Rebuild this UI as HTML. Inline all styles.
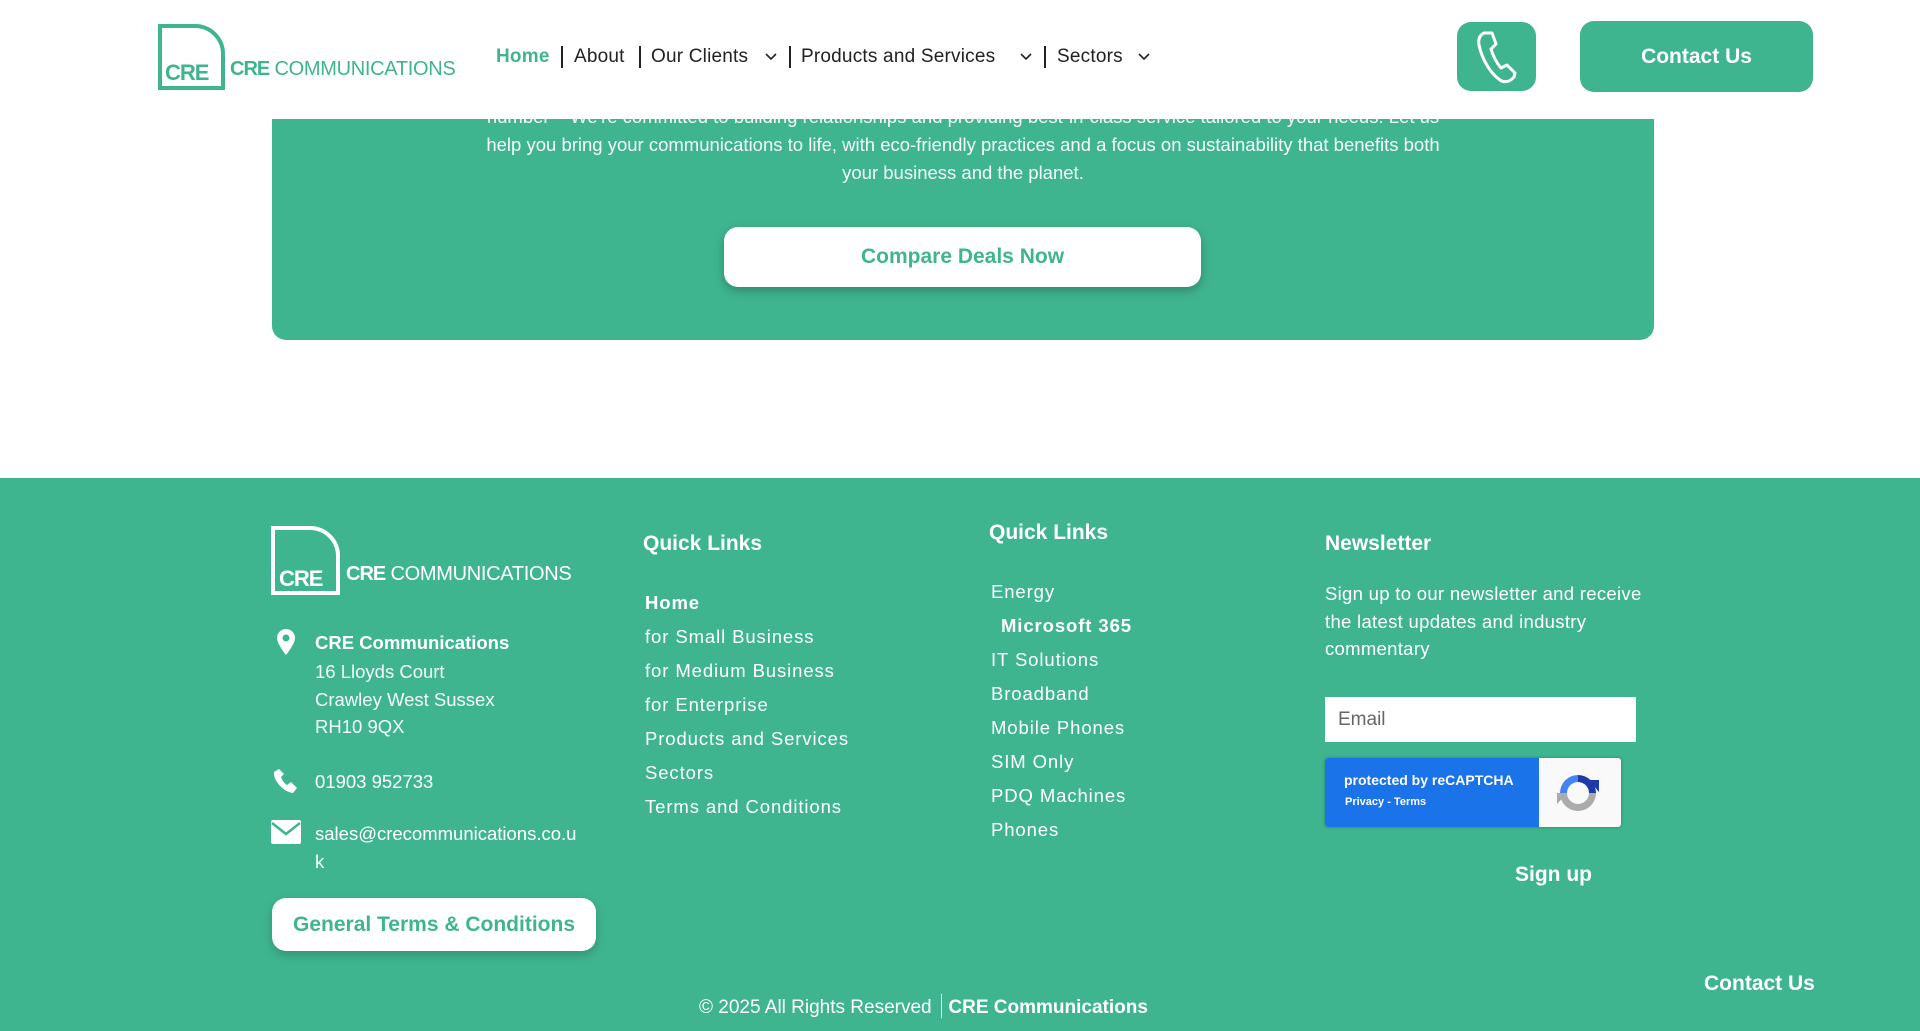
<!DOCTYPE html>
<html><head><meta charset="utf-8"><style>
*{margin:0;padding:0;box-sizing:border-box}
body{width:1920px;height:1031px;overflow:hidden;background:#fff;font-family:"Liberation Sans",sans-serif;position:relative}
.a{position:absolute;white-space:nowrap}
.g{background:#3fb58f}
.w{color:#fff}
.nav{font-size:19px;color:#222;top:46px;letter-spacing:.2px}
.sep{position:absolute;top:46px;width:2px;height:22px;background:#222}
.ql{font-size:18.5px;color:#fff;letter-spacing:.9px}
.ft{font-size:18.5px;color:#fff}
</style></head><body>
<div class="a g" style="left:272px;top:0;width:1382px;height:340px;border-radius:0 0 14px 14px"></div>
<div class="a w" style="left:0;width:1926px;text-align:center;top:103px;font-size:18.5px;line-height:28px;opacity:.95">number – We're committed to building relationships and providing best-in-class service tailored to your needs. Let us<br>help you bring your communications to life, with eco-friendly practices and a focus on sustainability that benefits both<br>your business and the planet.</div>
<div class="a" style="left:724px;top:227px;width:477px;height:60px;background:#fff;border-radius:14px;box-shadow:0 4px 10px rgba(0,0,0,.25);color:#3fb58f;font-weight:bold;font-size:21px;text-align:center;line-height:60px">Compare Deals Now</div>
<div class="a" style="left:0;top:0;width:1920px;height:119px;background:#fff"></div>
<svg class="a" style="left:157px;top:23px" width="70" height="68" viewBox="0 0 70 68"><path d="M3 3H38A28 28 0 0 1 66 31V65H3Z" fill="none" stroke="#3fb58f" stroke-width="4"/></svg>
<div class="a" style="left:165px;top:60px;font-size:22px;font-weight:bold;color:#3fb58f;letter-spacing:-1px">CRE</div>
<div class="a" style="left:230px;top:58px;font-size:20px;color:#3fb58f;letter-spacing:-.3px"><b style="letter-spacing:-1px">CRE</b> COMMUNICATIONS</div>
<div class="a nav" style="left:496px;color:#3fb58f;font-weight:bold">Home</div>
<div class="sep" style="left:561px"></div>
<div class="a nav" style="left:574px">About</div>
<div class="sep" style="left:639px"></div>
<div class="a nav" style="left:651px">Our Clients</div>
<svg class="a" style="left:765px;top:53px" width="12" height="8" viewBox="0 0 12 8"><path d="M1 1L6 6L11 1" fill="none" stroke="#222" stroke-width="1.6"/></svg>
<div class="sep" style="left:789px"></div>
<div class="a nav" style="left:801px">Products and Services</div>
<svg class="a" style="left:1020px;top:53px" width="12" height="8" viewBox="0 0 12 8"><path d="M1 1L6 6L11 1" fill="none" stroke="#222" stroke-width="1.6"/></svg>
<div class="sep" style="left:1044px"></div>
<div class="a nav" style="left:1057px">Sectors</div>
<svg class="a" style="left:1138px;top:53px" width="12" height="8" viewBox="0 0 12 8"><path d="M1 1L6 6L11 1" fill="none" stroke="#222" stroke-width="1.6"/></svg>
<div class="a g" style="left:1457px;top:22px;width:79px;height:69px;border-radius:14px"></div>
<svg class="a" style="left:1474px;top:29px" width="46" height="56" viewBox="0 0 46 56"><path d="M10 4C6 6 4 10 5 16C8 30 16 44 26 51C30 54 36 53 40 48L41 44L33 36L27 39C22 33 19 27 17 20L22 15L18 4Z" fill="none" stroke="#fff" stroke-width="3" stroke-linejoin="round"/></svg>
<div class="a g" style="left:1580px;top:21px;width:233px;height:71px;border-radius:14px;color:#fff;font-weight:bold;font-size:21px;text-align:center;line-height:71px">Contact Us</div>
<div class="a g" style="left:0;top:478px;width:1920px;height:553px"></div>
<svg class="a" style="left:270px;top:525px" width="72" height="72" viewBox="0 0 72 72"><path d="M3 3H40A28 28 0 0 1 68 31V68H3Z" fill="none" stroke="#fff" stroke-width="4"/></svg>
<div class="a w" style="left:279px;top:566px;font-size:22px;font-weight:bold;letter-spacing:-1px">CRE</div>
<div class="a w" style="left:346px;top:563px;font-size:20px;letter-spacing:-.3px"><b style="letter-spacing:-1px">CRE</b> COMMUNICATIONS</div>
<svg class="a" style="left:276px;top:628px" width="20" height="28" viewBox="0 0 20 28"><path d="M10 1C5 1 1 5 1 10C1 16 10 27 10 27C10 27 19 16 19 10C19 5 15 1 10 1Z" fill="#fff"/><circle cx="10" cy="10" r="3.5" fill="#3fb58f"/></svg>
<div class="a ft" style="left:315px;top:632px;font-weight:bold">CRE Communications</div>
<div class="a ft" style="left:315px;top:658px;line-height:27.5px;opacity:.95">16 Lloyds Court<br>Crawley West Sussex<br>RH10 9QX</div>
<svg class="a" style="left:273px;top:768px" width="26" height="26" viewBox="0 0 26 26"><path d="M6 1L1 4C0 12 10 24 20 25L24 20L18 14L14 17C11 15 9 12 8 9L11 6Z" fill="#fff"/></svg>
<div class="a ft" style="left:315px;top:771px">01903 952733</div>
<svg class="a" style="left:271px;top:820px" width="30" height="24" viewBox="0 0 30 24"><rect x="0" y="0" width="30" height="24" rx="2" fill="#fff"/><path d="M1 3L15 14L29 3" fill="none" stroke="#3fb58f" stroke-width="2.5"/></svg>
<div class="a ft" style="left:315px;top:820px;line-height:28px">sales@crecommunications.co.u<br>k</div>
<div class="a" style="left:272px;top:898px;width:324px;height:53px;background:#fff;border-radius:14px;box-shadow:0 4px 10px rgba(0,0,0,.2);color:#3fb58f;font-weight:bold;font-size:21px;text-align:center;line-height:53px">General Terms &amp; Conditions</div>
<div class="a w" style="left:643px;top:532px;font-size:21px;font-weight:bold">Quick Links</div>
<div class="a ql" style="left:645px;top:586px;line-height:34px"><b>Home</b><br>for Small Business<br>for Medium Business<br>for Enterprise<br>Products and Services<br>Sectors<br>Terms and Conditions</div>
<div class="a w" style="left:989px;top:521px;font-size:21px;font-weight:bold">Quick Links</div>
<div class="a ql" style="left:991px;top:575px;line-height:34px">Energy<br><b style="margin-left:10px">Microsoft 365</b><br>IT Solutions<br>Broadband<br>Mobile Phones<br>SIM Only<br>PDQ Machines<br>Phones</div>
<div class="a w" style="left:1325px;top:532px;font-size:21px;font-weight:bold">Newsletter</div>
<div class="a ft" style="left:1325px;top:580px;line-height:27.5px;letter-spacing:.3px">Sign up to our newsletter and receive<br>the latest updates and industry<br>commentary</div>
<div class="a" style="left:1325px;top:697px;width:311px;height:45px;background:#fff;color:#666;font-size:19px;line-height:45px;padding-left:13px">Email</div>
<div class="a" style="left:1325px;top:758px;width:296px;height:69px;background:#f9f9f9;border-radius:3px;box-shadow:0 0 3px rgba(0,0,0,.3);overflow:hidden">
<div style="position:absolute;left:0;top:0;width:214px;height:69px;background:#1a73e8"></div>
<div style="position:absolute;left:19px;top:14px;color:#fff;font-size:14px;font-weight:bold">protected by reCAPTCHA</div>
<div style="position:absolute;left:20px;top:38px;color:#fff;font-size:11px;font-weight:bold">Privacy - Terms</div>
<svg style="position:absolute;left:228px;top:10px" width="50" height="50" viewBox="0 0 50 50"><path d="M25 7A18 18 0 0 1 43 25H36A11 11 0 0 0 25 14Z" fill="#1c3aa9"/><path d="M36 12L46 12L46 24Z" fill="#1c3aa9"/><path d="M7 25A18 18 0 0 1 25 7V14A11 11 0 0 0 14 25Z" fill="#4285f4"/><path d="M7 25A18 18 0 0 0 43 25H36A11 11 0 0 1 14 25Z" fill="#ababab"/><path d="M4 25L14 25L4 36Z" fill="#ababab"/></svg>
</div>
<div class="a w" style="left:1515px;top:863px;font-size:21px;font-weight:bold">Sign up</div>
<div class="a w" style="left:1704px;top:972px;font-size:21px;font-weight:bold">Contact Us</div>
<div class="a w" style="left:699px;top:994px;font-size:19px">© 2025 All Rights Reserved <span style="display:inline-block;width:1.5px;height:24px;background:#fff;vertical-align:-5px;margin:0 6px 0 4px"></span><b>CRE Communications</b></div>
</body></html>
